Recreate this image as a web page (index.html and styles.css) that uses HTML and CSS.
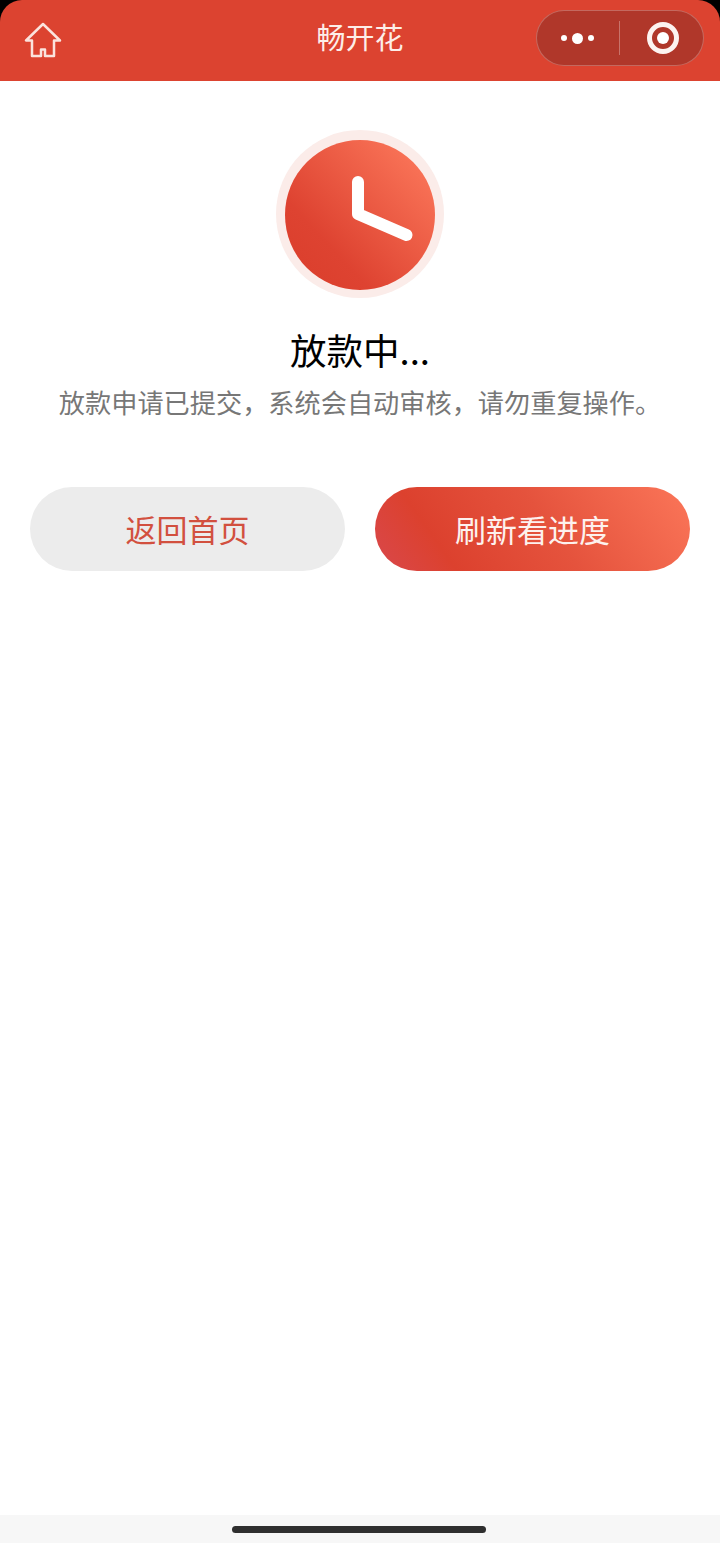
FILE: index.html
```html
<!DOCTYPE html>
<html lang="zh-CN">
<head>
    <meta charset="UTF-8">
    <meta name="viewport" content="width=device-width, initial-scale=1.0">
    <title>畅开花</title>
    <link rel="stylesheet" href="styles.css">
</head>
<body>
    <div class="page">
        <div class="nav-wrap">
            <header class="nav">
                <div class="nav-left">
                    <svg class="home-icon" width="38" height="36" viewBox="0 0 38 36" fill="none">
                        <path d="M19 2 L2 18.500 H8 V34 H17 V27.500 H21 V34 H30 V18.500 H36 Z" stroke="#fbe3dd" stroke-width="2.500" stroke-linejoin="round"/>
                    </svg>
                </div>
                <div class="nav-title">畅开花</div>
                <div class="nav-right">
                    <div class="capsule">
                        <div class="capsule-more">
                            <span class="dot"></span>
                            <span class="dot dot-big"></span>
                            <span class="dot"></span>
                        </div>
                        <div class="capsule-line"></div>
                        <div class="capsule-close"></div>
                    </div>
                </div>
            </header>
        </div>

        <main class="content">
            <svg class="status-icon" width="168" height="168" viewBox="0 0 168 168">
                <defs>
                    <linearGradient id="clockFill" x1="0.15" y1="0.85" x2="0.9" y2="0.15">
                        <stop offset="0" stop-color="#dc402e"/>
                        <stop offset="0.2" stop-color="#de4331"/>
                        <stop offset="1" stop-color="#f97357"/>
                    </linearGradient>
                </defs>
                <circle cx="84" cy="84" r="84" fill="#fbece9"/>
                <circle cx="84" cy="85" r="75" fill="url(#clockFill)"/>
                <path d="M82 52 V84 L130.500 105" fill="none" stroke="#fff" stroke-width="12" stroke-linecap="round" stroke-linejoin="round"/>
            </svg>

            <h1 class="status-title">放款中...</h1>
            <p class="status-desc">放款申请已提交，系统会自动审核，请勿重复操作。</p>

            <div class="btn-row">
                <button class="btn btn-home">返回首页</button>
                <button class="btn btn-refresh">刷新看进度</button>
            </div>
        </main>

        <footer class="home-bar">
            <div class="home-indicator"></div>
        </footer>
    </div>
</body>
</html>
```

FILE: styles.css
```css
* {
    box-sizing: border-box;
    margin: 0;
    padding: 0;
    font-family: "Noto Sans CJK SC", "Noto Sans", sans-serif;
}

body {
    background-color: #fff;
}

.page {
    display: flex;
    flex-direction: column;
    height: 1543px;
}

.nav-wrap {
    background-color: #000;
}

.nav {
    display: grid;
    grid-template-columns: 1fr auto 1fr;
    align-items: center;
    height: 81px;
    padding: 10px 16px 15px;
    background-color: #dc4330;
    border-radius: 22px 22px 0 0;
}

.home-icon {
    display: block;
    margin: 3px 0 0 8px;
}

.nav-title {
    padding-bottom: 4px;
    color: #fdeee9;
    font-size: 29px;
    line-height: 52px;
}

.nav-right {
    display: flex;
    justify-content: flex-end;
}

.capsule {
    display: flex;
    align-items: center;
    width: 168px;
    height: 56px;
    background-color: #b0372a;
    border: 1px solid rgba(255, 255, 255, 0.25);
    border-radius: 28px;
}

.capsule-more {
    display: flex;
    align-items: center;
    justify-content: center;
    gap: 5px;
    width: 82px;
    padding-right: 2px;
}

.dot {
    width: 6px;
    height: 6px;
    background-color: #fff;
    border-radius: 50%;
}

.dot-big {
    width: 11px;
    height: 11px;
}

.capsule-line {
    width: 1px;
    height: 34px;
    background-color: rgba(255, 255, 255, 0.3);
}

.capsule-close {
    position: relative;
    width: 32px;
    height: 32px;
    margin-left: 27px;
    border: 5px solid #fdf3f0;
    border-radius: 50%;
}

.capsule-close::after {
    content: "";
    position: absolute;
    top: 5px;
    left: 5px;
    width: 12px;
    height: 12px;
    background-color: #fff;
    border-radius: 50%;
}

.content {
    flex: 1;
    display: flex;
    flex-direction: column;
    align-items: center;
    padding: 49px 30px 0;
}

.status-icon {
    display: block;
}

.status-title {
    margin-top: 27px;
    color: #000;
    font-size: 36.500px;
    font-weight: 400;
    line-height: 50px;
}

.status-desc {
    margin-top: 9px;
    color: #777;
    font-size: 26.200px;
    line-height: 36px;
    white-space: nowrap;
}

.btn-row {
    display: grid;
    grid-template-columns: 1fr 1fr;
    gap: 30px;
    width: 100%;
    margin-top: 67px;
}

.btn {
    height: 84px;
    padding-bottom: 2px;
    border: none;
    border-radius: 42px;
    font-size: 31px;
}

.btn-home {
    background-color: #ececec;
    color: #d2503f;
}

.btn-refresh {
    background: linear-gradient(55deg, #d9484c 0%, #dc412e 22%, #e5533d 55%, #fb7659 100%);
    color: #fdf1ee;
}

.home-bar {
    display: flex;
    justify-content: center;
    height: 28px;
    padding-top: 11px;
    background-color: #f7f7f7;
}

.home-indicator {
    width: 254px;
    height: 7px;
    margin-right: 2px;
    background-color: #2f2f2f;
    border-radius: 4px;
}
```
